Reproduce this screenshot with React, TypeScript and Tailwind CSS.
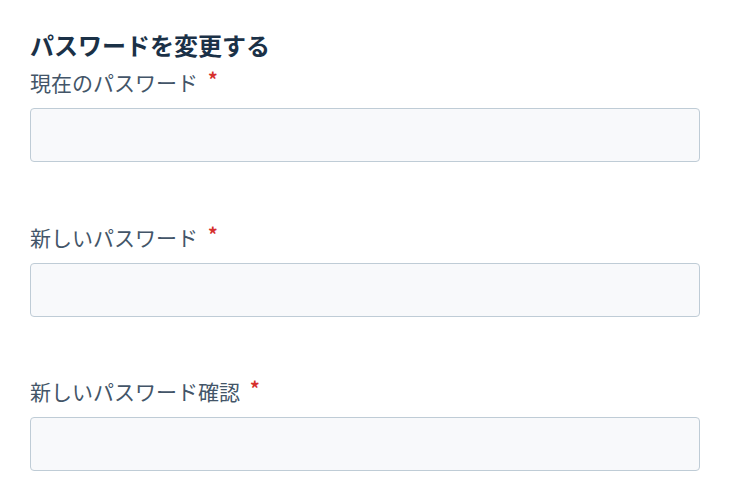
import React from "react";

function Field({ label, className = "" }: { label: string; className?: string }) {
  return (
    <div className={"flex flex-col " + className}>
      <label className="flex items-center h-[30px] text-[21px] leading-[30px] text-[#435568]">
        <span>{label}</span>
        <span className="ml-[10px] text-[19px] font-bold leading-[30px] text-[#d6302c] -translate-y-[3px]">*</span>
      </label>
      <input
        type="password"
        className="mt-[11px] h-[54px] w-full rounded-[4px] border border-[#bfccd6] bg-[#f8f9fb] outline-none"
      />
    </div>
  );
}

export default function App() {
  return (
    <div
      className="w-[748px] h-[502px] bg-white pl-[30px] pt-[31px]"
      style={{ fontFamily: '"Noto Sans CJK JP", "Noto Sans", sans-serif' }}
    >
      <div className="w-[670px] flex flex-col">
        <h2 className="text-[24px] leading-[28px] font-bold text-[#1b3147]">
          パスワードを変更する
        </h2>
        <div className="mt-[8px] flex flex-col">
          <Field label="現在のパスワード" />
          <Field label="新しいパスワード" className="mt-[60px]" />
          <Field label="新しいパスワード確認" className="mt-[59px]" />
        </div>
      </div>
    </div>
  );
}
